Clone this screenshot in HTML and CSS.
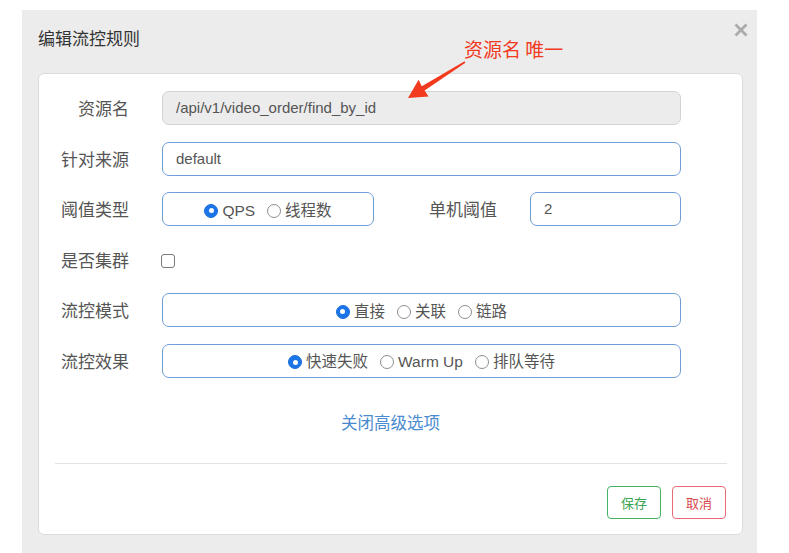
FILE: index.html
```html
<!DOCTYPE html>
<html lang="zh-CN">
<head>
<meta charset="utf-8">
<title>编辑流控规则</title>
<link rel="stylesheet" href="styles.css">
</head>
<body>
<div class="modal">
  <div class="modal-header">
    <h4 class="modal-title">编辑流控规则</h4>
    <span class="close" aria-label="close">
      <svg width="14" height="14" viewBox="0 0 14 14"><path d="M1.5 1.5 L12.5 12.5 M12.5 1.5 L1.5 12.5" stroke="#ababab" stroke-width="2.8" stroke-linecap="butt"/></svg>
    </span>
  </div>
  <div class="card">
    <div class="form">
      <label class="label">资源名</label>
      <div class="input disabled">/api/v1/video_order/find_by_id</div>

      <label class="label">针对来源</label>
      <div class="input">default</div>

      <label class="label">阈值类型</label>
      <div class="split">
        <div class="group narrow">
          <span class="opt"><span class="radio on"></span>QPS</span>
          <span class="opt"><span class="radio"></span>线程数</span>
        </div>
        <label class="label inner">单机阈值</label>
        <div class="input short">2</div>
      </div>

      <label class="label">是否集群</label>
      <div class="check-row"><span class="checkbox"></span></div>

      <label class="label">流控模式</label>
      <div class="group">
        <span class="opt"><span class="radio on"></span>直接</span>
        <span class="opt"><span class="radio"></span>关联</span>
        <span class="opt"><span class="radio"></span>链路</span>
      </div>

      <label class="label">流控效果</label>
      <div class="group">
        <span class="opt"><span class="radio on"></span>快速失败</span>
        <span class="opt"><span class="radio"></span>Warm Up</span>
        <span class="opt"><span class="radio"></span>排队等待</span>
      </div>
    </div>
    <div class="advanced"><a class="link">关闭高级选项</a></div>
    <div class="divider"></div>
    <div class="footer">
      <button class="btn save">保存</button>
      <button class="btn cancel">取消</button>
    </div>
  </div>
</div>
<div class="note">资源名 唯一</div>
<svg class="arrow" width="789" height="120" viewBox="0 0 789 120">
  <polygon points="408,98 428.5,96.5 424.6,90.6 465.4,62.7 464.6,61.3 421.8,86.2 418.6,79.8" fill="#f23a1e"/>
</svg>
</body>
</html>
```
FILE: styles.css
```css
* { box-sizing: border-box; }
html, body { margin: 0; padding: 0; }
body {
  position: relative;
  width: 789px;
  height: 553px;
  background: #fff;
  overflow: hidden;
  font-family: "Liberation Sans", "Noto Sans CJK SC", sans-serif;
  color: #555;
}
.modal {
  position: relative;
  margin: 10px 0 0 22px;
  width: 735px;
  height: 543px;
  background: #ececec;
}
.modal-header {
  height: 63px;
  padding: 16px 16px 0;
}
.modal-title {
  margin: 0;
  font-size: 17px;
  line-height: 24px;
  font-weight: normal;
  color: #333;
  font-family: "Noto Sans CJK SC", sans-serif;
}
.close {
  position: absolute;
  top: 13px;
  right: 9px;
  width: 14px;
  height: 14px;
  display: block;
}
.close svg { display: block; }
.card {
  margin-left: 16px;
  width: 705px;
  background: #fff;
  border: 1px solid #dcdcdc;
  border-radius: 6px;
}
.form {
  display: grid;
  grid-template-columns: 90px 1fr;
  column-gap: 33px;
  row-gap: 16.6px;
  padding: 17px 61px 0 0;
}
.label {
  font-family: "Noto Sans CJK SC", sans-serif;
  font-size: 17px;
  color: #555;
  text-align: right;
  align-self: center;
  line-height: 24px;
  white-space: nowrap;
}
.input {
  height: 34px;
  border: 1px solid #6e9ed6;
  border-radius: 7px;
  padding: 0 13px;
  font-size: 15px;
  line-height: 32px;
  color: #555;
  background: #fff;
}
.input.disabled {
  background: #ececec;
  border-color: #d2d2d2;
}
.split {
  display: grid;
  grid-template-columns: 212px 1fr 151px;
  column-gap: 33px;
}
.label.inner { text-align: right; }
.group {
  height: 34px;
  border: 1px solid #6e9ed6;
  border-radius: 7px;
  display: flex;
  align-items: center;
  justify-content: center;
  gap: 12px;
  padding-top: 3px;
  font-size: 15.5px;
  color: #555;
}
.opt {
  display: inline-flex;
  align-items: center;
  gap: 4px;
  line-height: 20px;
  white-space: nowrap;
}
.radio {
  width: 14px;
  height: 14px;
  border-radius: 50%;
  border: 1px solid #8e8e8e;
  background: #fff;
  flex: none;
  position: relative;
}
.radio.on {
  background: #1b74e8;
  border-color: #1b6fdc;
}
.radio.on::after {
  content: "";
  position: absolute;
  left: 3.5px;
  top: 3.5px;
  width: 5px;
  height: 5px;
  border-radius: 50%;
  background: #fff;
}
.check-row {
  height: 34px;
  display: flex;
  align-items: center;
  padding-top: 3px;
}
.checkbox {
  width: 14px;
  height: 14px;
  border: 1px solid #7a7a7a;
  border-radius: 3px;
  background: #fff;
  margin-left: -1px;
}
.advanced {
  margin-top: 32px;
  text-align: center;
  line-height: 24px;
  height: 24px;
}
.link {
  font-family: "Noto Sans CJK SC", sans-serif;
  font-size: 16.5px;
  color: #4a8bd0;
  text-decoration: none;
}
.divider {
  margin: 29px 15px 0 16px;
  height: 1px;
  background: #e3e3e3;
}
.footer {
  display: flex;
  justify-content: flex-end;
  gap: 11px;
  padding: 22px 16px 15px;
}
.btn {
  width: 54px;
  height: 33px;
  border-radius: 4px;
  background: #fff;
  font-family: "Noto Sans CJK SC", sans-serif;
  font-size: 13px;
  padding: 0;
  line-height: 31px;
}
.btn.save {
  border: 1px solid #45b462;
  color: #3aa455;
}
.btn.cancel {
  border: 1px solid #ea6b78;
  color: #d9474f;
}
.note {
  position: absolute;
  left: 464px;
  top: 36px;
  font-family: "Noto Sans CJK SC", sans-serif;
  font-size: 19px;
  line-height: 26px;
  color: #f23a1e;
  white-space: nowrap;
}
.arrow {
  position: absolute;
  left: 0;
  top: 0;
  pointer-events: none;
}
```
